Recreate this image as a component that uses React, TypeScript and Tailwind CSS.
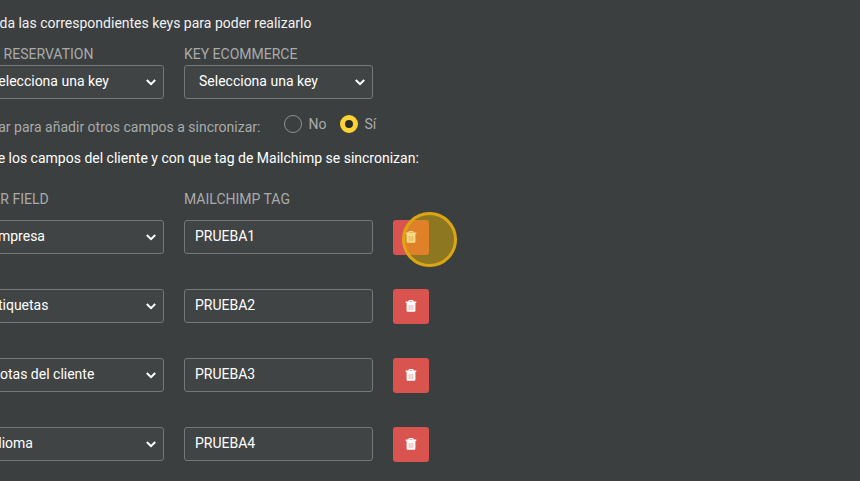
import { useState } from "react";

interface SelectFieldProps {
  id: string;
  label: string;
  hideLabel?: boolean;
  options: string[];
}

interface TagRow {
  field: string;
  tag: string;
}

const KEYS = ["Selecciona una key"];
const FIELDS = ["Empresa", "Etiquetas", "Notas del cliente", "Idioma"];

const ROWS: TagRow[] = [
  { field: "Empresa", tag: "PRUEBA1" },
  { field: "Etiquetas", tag: "PRUEBA2" },
  { field: "Notas del cliente", tag: "PRUEBA3" },
  { field: "Idioma", tag: "PRUEBA4" },
];

function TrashIcon() {
  return (
    <svg width="12" height="12" viewBox="0 0 12 12" aria-hidden="true">
      <path
        fill="#fff"
        fillRule="evenodd"
        d="M4 0h4l.8 1.6H11.3v1.5H.7V1.6h2.5zM4.7 .9 4.3 1.6h3.4L7.3 .9zM1.6 3.1h8.8v7.4c0 .8-.5 1.3-1.2 1.3H2.8c-.7 0-1.2-.5-1.2-1.3z"
      />
      <path stroke="#e9a096" strokeWidth="0.8" d="M4.2 5v5M6 5v5M7.8 5v5" />
    </svg>
  );
}

function SelectField(props: SelectFieldProps) {
  return (
    <div className="w-[189px]">
      <label
        htmlFor={props.id}
        className={
          props.hideLabel ? "sr-only" : "block pb-px leading-5 text-[#a9abab]"
        }
      >
        {props.label}
      </label>
      <div className="relative">
        <select
          id={props.id}
          defaultValue={props.options[0]}
          className="block h-[34px] w-full appearance-none rounded-[3px] border border-[#747878] bg-[#404444] pb-0.5 pl-3.5 text-white"
        >
          {props.options.map((option) => (
            <option key={option}>{option}</option>
          ))}
        </select>
        <svg
          className="pointer-events-none absolute top-3.5 right-2"
          width="10"
          height="7"
          viewBox="0 0 10 7"
          fill="none"
          stroke="#fff"
          strokeWidth="2"
          aria-hidden="true"
        >
          <path d="M.8 1 5 5.2 9.2 1" />
        </svg>
      </div>
    </div>
  );
}

export default function App() {
  const [sync, setSync] = useState("si");

  return (
    <main className="min-h-screen overflow-hidden bg-[#3b3f40] font-[Roboto,sans-serif] text-sm text-white">
      <form className="-ml-[25px] pt-[13px]">
        <p className="leading-5 text-[#f1f1f1]">
          Añada las correspondientes keys para poder realizarlo
        </p>

        <div className="mt-[11px] flex gap-5">
          <SelectField id="key-reservation" label="KEY RESERVATION" options={KEYS} />
          <SelectField id="key-ecommerce" label="KEY ECOMMERCE" options={KEYS} />
        </div>

        <fieldset className="mt-[15px] flex gap-6 text-[#a9abab]">
          <legend className="float-left pt-[3px] leading-5">
            Clicar para añadir otros campos a sincronizar:
          </legend>
          <div className="flex items-start gap-3.5 leading-5">
            <label className="flex items-center gap-1.5">
              <input
                type="radio"
                name="sync"
                checked={sync === "no"}
                onChange={() => setSync("no")}
                className="size-[18px] appearance-none rounded-full border border-[#909393] checked:border-[5px] checked:border-[#fdd235] checked:bg-[#2b2d2d]"
              />
              No
            </label>
            <label className="flex items-center gap-1.5">
              <input
                type="radio"
                name="sync"
                checked={sync === "si"}
                onChange={() => setSync("si")}
                className="size-[18px] appearance-none rounded-full border border-[#909393] checked:border-[5px] checked:border-[#fdd235] checked:bg-[#2b2d2d]"
              />
              Sí
            </label>
          </div>
        </fieldset>

        <p className="mt-[11px] leading-5 text-white">
          Elige los campos del cliente y con que tag de Mailchimp se sincronizan:
        </p>

        <div className="mt-[21px] flex gap-5 leading-5 text-[#a9abab]">
          <span className="w-[189px]">USER FIELD</span>
          <span className="w-[189px]">MAILCHIMP TAG</span>
        </div>

        <div className="mt-[11px] flex flex-col gap-[34px]">
          {ROWS.map((row, i) => (
            <div key={row.field} className="flex gap-5">
              <SelectField
                id={`field-${i}`}
                label="User field"
                hideLabel
                options={[row.field, ...FIELDS.filter((f) => f !== row.field)]}
              />
              <input
                type="text"
                aria-label="Mailchimp tag"
                defaultValue={row.tag}
                className="h-[34px] w-[189px] rounded-[3px] border border-[#747878] bg-[#404444] px-2.5 pb-0.5 text-white"
              />
              <div className="relative">
                <button
                  type="button"
                  aria-label="Eliminar"
                  className="flex h-[35px] w-9 items-center justify-center rounded-[3px] bg-[#d9534f] pb-0.5"
                >
                  <TrashIcon />
                </button>
                {i === 0 && (
                  <div className="pointer-events-none absolute -top-2 left-[9px] size-[55px] rounded-full border-[3px] border-[#dca612] bg-[#e8b300]/48" />
                )}
              </div>
            </div>
          ))}
        </div>
      </form>
    </main>
  );
}
